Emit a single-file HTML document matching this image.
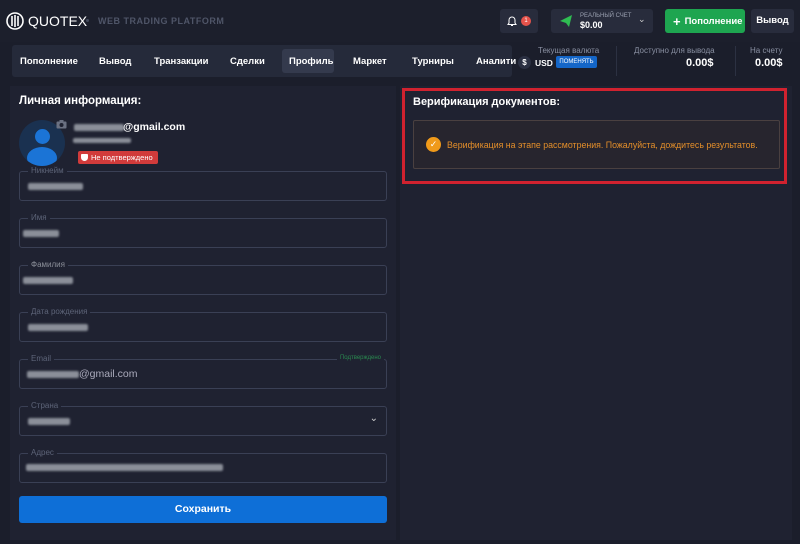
<!DOCTYPE html>
<html><head><meta charset="utf-8"><style>
*{box-sizing:border-box;margin:0;padding:0}
body{width:800px;height:544px;background:#1b1e2b;font-family:"Liberation Sans",sans-serif;color:#fff;position:relative;overflow:hidden;font-size:11px}
.a{position:absolute}
.field{position:absolute;left:19px;width:368px;height:30px;border:1px solid #3a4055;border-radius:3px}
.field .lb{position:absolute;top:-6px;left:8px;background:#1f2231;padding:0 3px;font-size:8px;color:#5d6478}
.blur{position:absolute;height:7px;background:#8b8f99;border-radius:2px;filter:blur(1px)}
</style></head><body>
<div class="a" style="left:0;top:0;width:800px;height:42px;background:#1c1f2c"></div>
<svg class="a" style="left:6px;top:12px" width="18" height="18" viewBox="0 0 18 18"><circle cx="9" cy="9" r="8" fill="none" stroke="#fff" stroke-width="1.6"/><path d="M6 4v10M9 3v12M12 4v10" stroke="#fff" stroke-width="1.6"/></svg>
<div class="a" style="left:28px;top:13px;font-size:14px">QUOTEX</div>
<div class="a" style="left:86px;top:19px;width:3px;height:3px;background:#444a5c;border-radius:50%"></div>
<div class="a" style="left:98px;top:16px;font-size:9px;font-weight:bold;color:#4f5568;letter-spacing:.5px">WEB TRADING PLATFORM</div>
<div class="a" style="left:500px;top:9px;width:38px;height:24px;background:#282c3c;border-radius:3px"></div>
<svg class="a" style="left:507px;top:15px" width="10" height="12" viewBox="0 0 10 12"><path d="M2 8V5a3 3 0 0 1 6 0v3l1 1.5H1z" fill="none" stroke="#fff" stroke-width="1"/><path d="M4 10.5h2" stroke="#fff"/></svg>
<div class="a" style="left:521px;top:16px;width:10px;height:10px;border-radius:50%;background:#e5534b;font-size:6px;text-align:center;line-height:10px">1</div>
<div class="a" style="left:551px;top:9px;width:102px;height:24px;background:#282c3c;border-radius:3px"></div>
<svg class="a" style="left:560px;top:15px" width="12" height="12" viewBox="0 0 12 12"><path d="M0 6L12 0 9 12 6 8z" fill="#2fbd52"/></svg>
<div class="a" style="left:580px;top:13px;font-size:6px;color:#9aa0b0">РЕАЛЬНЫЙ СЧЕТ</div>
<div class="a" style="left:580px;top:20px;font-size:9px;font-weight:bold">$0.00</div>
<div class="a" style="left:638px;top:14px;font-size:9px;color:#ccc">⌄</div>
<div class="a" style="left:665px;top:9px;width:80px;height:24px;background:#1ea550;border-radius:3px;font-size:9.5px;font-weight:bold;display:flex;align-items:center;padding-left:8px;gap:4px"><span style="font-size:13px;line-height:1">+</span><span>Пополнение</span></div>
<div class="a" style="left:751px;top:9px;width:43px;height:24px;background:#282c3c;border-radius:3px;font-size:9.5px;font-weight:bold;line-height:24px;text-align:center">Вывод</div>
<div class="a" style="left:12px;top:45px;width:500px;height:32px;background:#252a3a;border-radius:3px"></div>
<div class="a" style="left:282px;top:49px;width:52px;height:24px;background:#343a4d;border-radius:3px"></div>
<div class="a" style="top:56px;font-size:9.5px;font-weight:bold;left:0;width:800px;height:12px">
<span class="a" style="left:20px">Пополнение</span><span class="a" style="left:99px">Вывод</span><span class="a" style="left:154px">Транзакции</span><span class="a" style="left:230px">Сделки</span><span class="a" style="left:289px">Профиль</span><span class="a" style="left:353px">Маркет</span><span class="a" style="left:412px">Турниры</span><span class="a" style="left:476px">Аналити</span></div>
<div class="a" style="left:538px;top:46px;font-size:8px;color:#8a90a2">Текущая валюта</div>
<div class="a" style="left:518px;top:56px;width:13px;height:13px;border-radius:50%;background:#2b3042;font-size:8px;text-align:center;line-height:13px;font-weight:bold">$</div>
<div class="a" style="left:535px;top:58px;font-size:8.5px;font-weight:bold">USD</div>
<div class="a" style="left:556px;top:56px;width:41px;height:12px;background:#1466c8;border-radius:2px;font-size:6px;text-align:center;line-height:12px">ПОМЕНЯТЬ</div>
<div class="a" style="left:616px;top:46px;width:1px;height:30px;background:#2c3142"></div>
<div class="a" style="left:735px;top:46px;width:1px;height:30px;background:#2c3142"></div>
<div class="a" style="left:634px;top:46px;font-size:8px;color:#8a90a2">Доступно для вывода</div>
<div class="a" style="left:686px;top:57px;font-size:11px;font-weight:bold">0.00$</div>
<div class="a" style="left:750px;top:46px;font-size:8px;color:#8a90a2">На счету</div>
<div class="a" style="left:755px;top:57px;font-size:11px;font-weight:bold">0.00$</div>
<div class="a" style="left:10px;top:86px;width:386px;height:454px;background:#1f2231"></div>
<div class="a" style="left:400px;top:86px;width:392px;height:454px;background:#1f2231"></div>
<div class="a" style="left:19px;top:95px;font-size:11.5px;font-weight:bold">Личная информация:</div>
<div class="a" style="left:19px;top:120px;width:46px;height:46px;border-radius:50%;background:#1a3150;overflow:hidden">
<div class="a" style="left:16px;top:9px;width:15px;height:15px;border-radius:50%;background:#1b74d6"></div>
<div class="a" style="left:8px;top:27px;width:30px;height:22px;border-radius:50%;background:#1b74d6"></div></div>
<svg class="a" style="left:56px;top:120px" width="11" height="9" viewBox="0 0 11 9"><rect x=".5" y="1.5" width="10" height="7" rx="1" fill="#6b7182"/><rect x="3.5" y="0" width="4" height="2" fill="#6b7182"/><circle cx="5.5" cy="5" r="2" fill="#1f2231"/></svg>
<div class="blur" style="left:74px;top:124px;width:50px"></div>
<div class="a" style="left:123px;top:121px;font-size:10.5px;font-weight:bold">@gmail.com</div>
<div class="blur" style="left:73px;top:138px;width:58px;height:5px"></div>
<div class="a" style="left:78px;top:151px;width:80px;height:13px;background:#d13b3b;border-radius:2px;font-size:7.5px;line-height:13px;padding-left:13px">Не подтверждено</div>
<div class="a" style="left:81px;top:154px;width:7px;height:7px;background:#fff;border-radius:1px 1px 4px 4px"></div>
<div class="field" style="top:171px"><span class="lb">Никнейм</span><div class="blur" style="left:8px;top:11px;width:55px"></div></div>
<div class="field" style="top:218px"><span class="lb">Имя</span><div class="blur" style="left:3px;top:11px;width:36px"></div></div>
<div class="field" style="top:265px"><span class="lb" style="color:#8b8f99">Фамилия</span><div class="blur" style="left:3px;top:11px;width:50px"></div></div>
<div class="field" style="top:312px"><span class="lb">Дата рождения</span><div class="blur" style="left:8px;top:11px;width:60px"></div></div>
<div class="field" style="top:359px"><span class="lb">Email</span><span class="a" style="right:2px;top:-5px;font-size:6px;color:#2a8a50;background:#1f2231;padding:0 3px">Подтверждено</span><div class="blur" style="left:7px;top:11px;width:52px"></div><span class="a" style="left:59px;top:8px;font-size:10.5px;color:#aab">@gmail.com</span></div>
<div class="field" style="top:406px"><span class="lb">Страна</span><div class="blur" style="left:8px;top:11px;width:42px"></div><span class="a" style="right:8px;top:6px;font-size:10px;color:#ccc">⌄</span></div>
<div class="field" style="top:453px"><span class="lb">Адрес</span><div class="blur" style="left:6px;top:10px;width:197px"></div></div>
<div class="a" style="left:19px;top:496px;width:368px;height:27px;background:#0e6fd7;border-radius:3px;font-size:10.5px;font-weight:bold;text-align:center;line-height:27px">Сохранить</div>
<div class="a" style="left:402px;top:88px;width:385px;height:96px;border:3px solid #d0222f"></div>
<div class="a" style="left:413px;top:96px;font-size:11px;font-weight:bold">Верификация документов:</div>
<div class="a" style="left:413px;top:120px;width:367px;height:49px;border:1px solid #4a4040;background:#27252e;border-radius:2px"></div>
<div class="a" style="left:426px;top:137px;width:15px;height:15px;border-radius:50%;background:#f09a1a;font-size:9px;text-align:center;line-height:15px;color:#fff">✓</div>
<div class="a" style="left:447px;top:140px;font-size:8.8px;color:#e38e2a;white-space:nowrap">Верификация на этапе рассмотрения. Пожалуйста, дождитесь результатов.</div>
</body></html>
